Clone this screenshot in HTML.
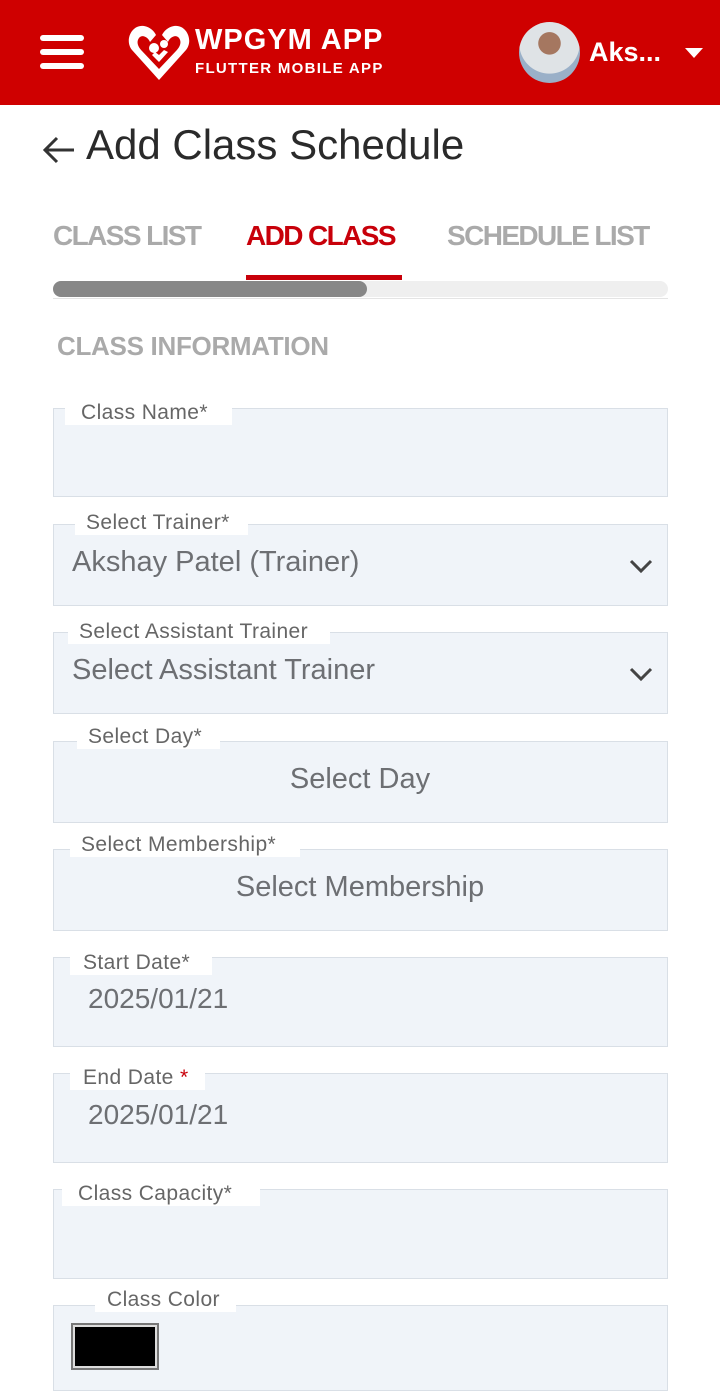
<!DOCTYPE html>
<html><head><meta charset="utf-8"><style>
*{margin:0;padding:0;box-sizing:border-box}
body{width:720px;height:1399px;background:#fff;font-family:"Liberation Sans",sans-serif;position:relative;overflow:hidden}
.hdr{position:absolute;left:0;top:0;width:720px;height:105px;background:#cf0000}
.ab{position:absolute}
.box{position:absolute;left:53px;width:615px;background:#f0f4f9;border:1px solid #d9dfe6}
.lbl{position:absolute;background:#fff;color:#666;font-size:21px;letter-spacing:0.4px;height:24px;line-height:24px}
.val{position:absolute;color:#6d6f73;font-size:29px}
.tab{position:absolute;top:220px;font-size:28px;font-weight:bold;letter-spacing:-1.6px;color:#aaa}
.chev{position:absolute;left:628px}
</style></head><body>
<div class="hdr">
 <div class="ab" style="left:40px;top:35px;width:44px;height:6px;background:#fff;border-radius:3px"></div>
 <div class="ab" style="left:40px;top:49px;width:44px;height:6px;background:#fff;border-radius:3px"></div>
 <div class="ab" style="left:40px;top:63px;width:44px;height:6px;background:#fff;border-radius:3px"></div>
 <svg class="ab" style="left:128px;top:22px" width="62" height="60" viewBox="0 0 62 60">
  <path d="M31 58 L4 28 C-4 18 4 2 16 4 C22 5 26 9 28 13 L22 20 C20 15 14 12 11 16 C8 20 10 25 14 29 L31 47 L48 29 C52 25 54 20 51 16 C48 12 42 15 40 20 L34 13 C36 9 40 5 46 4 C58 2 66 18 58 28 Z" fill="#fff"/>
  <circle cx="26" cy="26" r="5" fill="#fff"/><circle cx="36" cy="22" r="4" fill="#fff"/>
  <path d="M24 33 L31 40 L40 30 L36 28 L31 33 L27 30Z" fill="#fff"/>
 </svg>
 <div class="ab" style="left:195px;top:24px;color:#fff;font-weight:bold;font-size:29px;letter-spacing:1px">WPGYM APP</div>
 <div class="ab" style="left:195px;top:60px;color:#fff;font-weight:bold;font-size:15px;letter-spacing:1.3px">FLUTTER MOBILE APP</div>
 <div class="ab" style="left:519px;top:22px;width:61px;height:61px;border-radius:50%;background:radial-gradient(circle at 50% 35%,#a57760 0 22%,#dfe3e6 23% 60%,#9ab0c8 61%)"></div>
 <div class="ab" style="left:589px;top:37px;color:#fff;font-weight:bold;font-size:27px">Aks...</div>
 <div class="ab" style="left:685px;top:48px;width:0;height:0;border-left:9px solid transparent;border-right:9px solid transparent;border-top:10px solid #fff"></div>
</div>
<svg class="ab" style="left:42px;top:134px" width="34" height="30" viewBox="0 0 34 30"><path d="M32 16 H4 M15 4 L3 16 L15 28" stroke="#333" stroke-width="3" fill="none"/></svg>
<div class="ab" style="left:86px;top:121px;font-size:42px;color:#2a2a2a">Add Class Schedule</div>
<div class="tab" style="left:53px">CLASS LIST</div>
<div class="tab" style="left:246px;color:#c8000a">ADD CLASS</div>
<div class="tab" style="left:447px">SCHEDULE LIST</div>
<div class="ab" style="left:246px;top:275px;width:156px;height:5px;background:#c8000a"></div>
<div class="ab" style="left:53px;top:281px;width:615px;height:16px;background:#efefef;border-radius:8px"></div>
<div class="ab" style="left:53px;top:281px;width:314px;height:16px;background:#878787;border-radius:8px"></div>
<div class="ab" style="left:53px;top:298px;width:615px;height:1px;background:#e4e4e4"></div>
<div class="ab" style="left:57px;top:331px;font-size:26px;font-weight:bold;letter-spacing:-0.3px;color:#aaa">CLASS INFORMATION</div>

<div class="box" style="top:408px;height:89px"></div><div class="lbl" style="left:65px;top:401px;width:167px;padding-left:16px">Class Name*</div>
<div class="box" style="top:524px;height:82px"></div><div class="lbl" style="left:75px;top:511px;width:173px;padding-left:11px">Select Trainer*</div>
<div class="val" style="left:72px;top:546px">Akshay Patel (Trainer)</div>
<svg class="chev" style="top:558px" width="26" height="16" viewBox="0 0 26 16"><path d="M3 3 L13 13 L23 3" stroke="#444" stroke-width="3" fill="none"/></svg>
<div class="box" style="top:632px;height:82px"></div><div class="lbl" style="left:68px;top:620px;width:262px;padding-left:11px">Select Assistant Trainer</div>
<div class="val" style="left:72px;top:654px">Select Assistant Trainer</div>
<svg class="chev" style="top:666px" width="26" height="16" viewBox="0 0 26 16"><path d="M3 3 L13 13 L23 3" stroke="#444" stroke-width="3" fill="none"/></svg>
<div class="box" style="top:741px;height:82px"></div><div class="lbl" style="left:77px;top:725px;width:143px;padding-left:11px">Select Day*</div>
<div class="val" style="left:0;width:720px;text-align:center;top:763px">Select Day</div>
<div class="box" style="top:849px;height:82px"></div><div class="lbl" style="left:70px;top:833px;width:230px;padding-left:11px">Select Membership*</div>
<div class="val" style="left:0;width:720px;text-align:center;top:871px">Select Membership</div>
<div class="box" style="top:957px;height:90px"></div><div class="lbl" style="left:70px;top:951px;width:142px;padding-left:13px">Start Date*</div>
<div class="val" style="left:88px;top:983px;font-size:28px">2025/01/21</div>
<div class="box" style="top:1073px;height:90px"></div><div class="lbl" style="left:70px;top:1066px;width:135px;padding-left:13px">End Date <span style="color:#c8000a">*</span></div>
<div class="val" style="left:88px;top:1099px;font-size:28px">2025/01/21</div>
<div class="box" style="top:1189px;height:90px"></div><div class="lbl" style="left:62px;top:1182px;width:198px;padding-left:16px">Class Capacity*</div>
<div class="box" style="top:1305px;height:86px"></div><div class="lbl" style="left:95px;top:1288px;width:141px;padding-left:12px">Class Color</div>
<div class="ab" style="left:71px;top:1323px;width:88px;height:47px;background:#000;border:2px solid #777;box-shadow:inset 0 0 0 2px #ddd"></div>
</body></html>
